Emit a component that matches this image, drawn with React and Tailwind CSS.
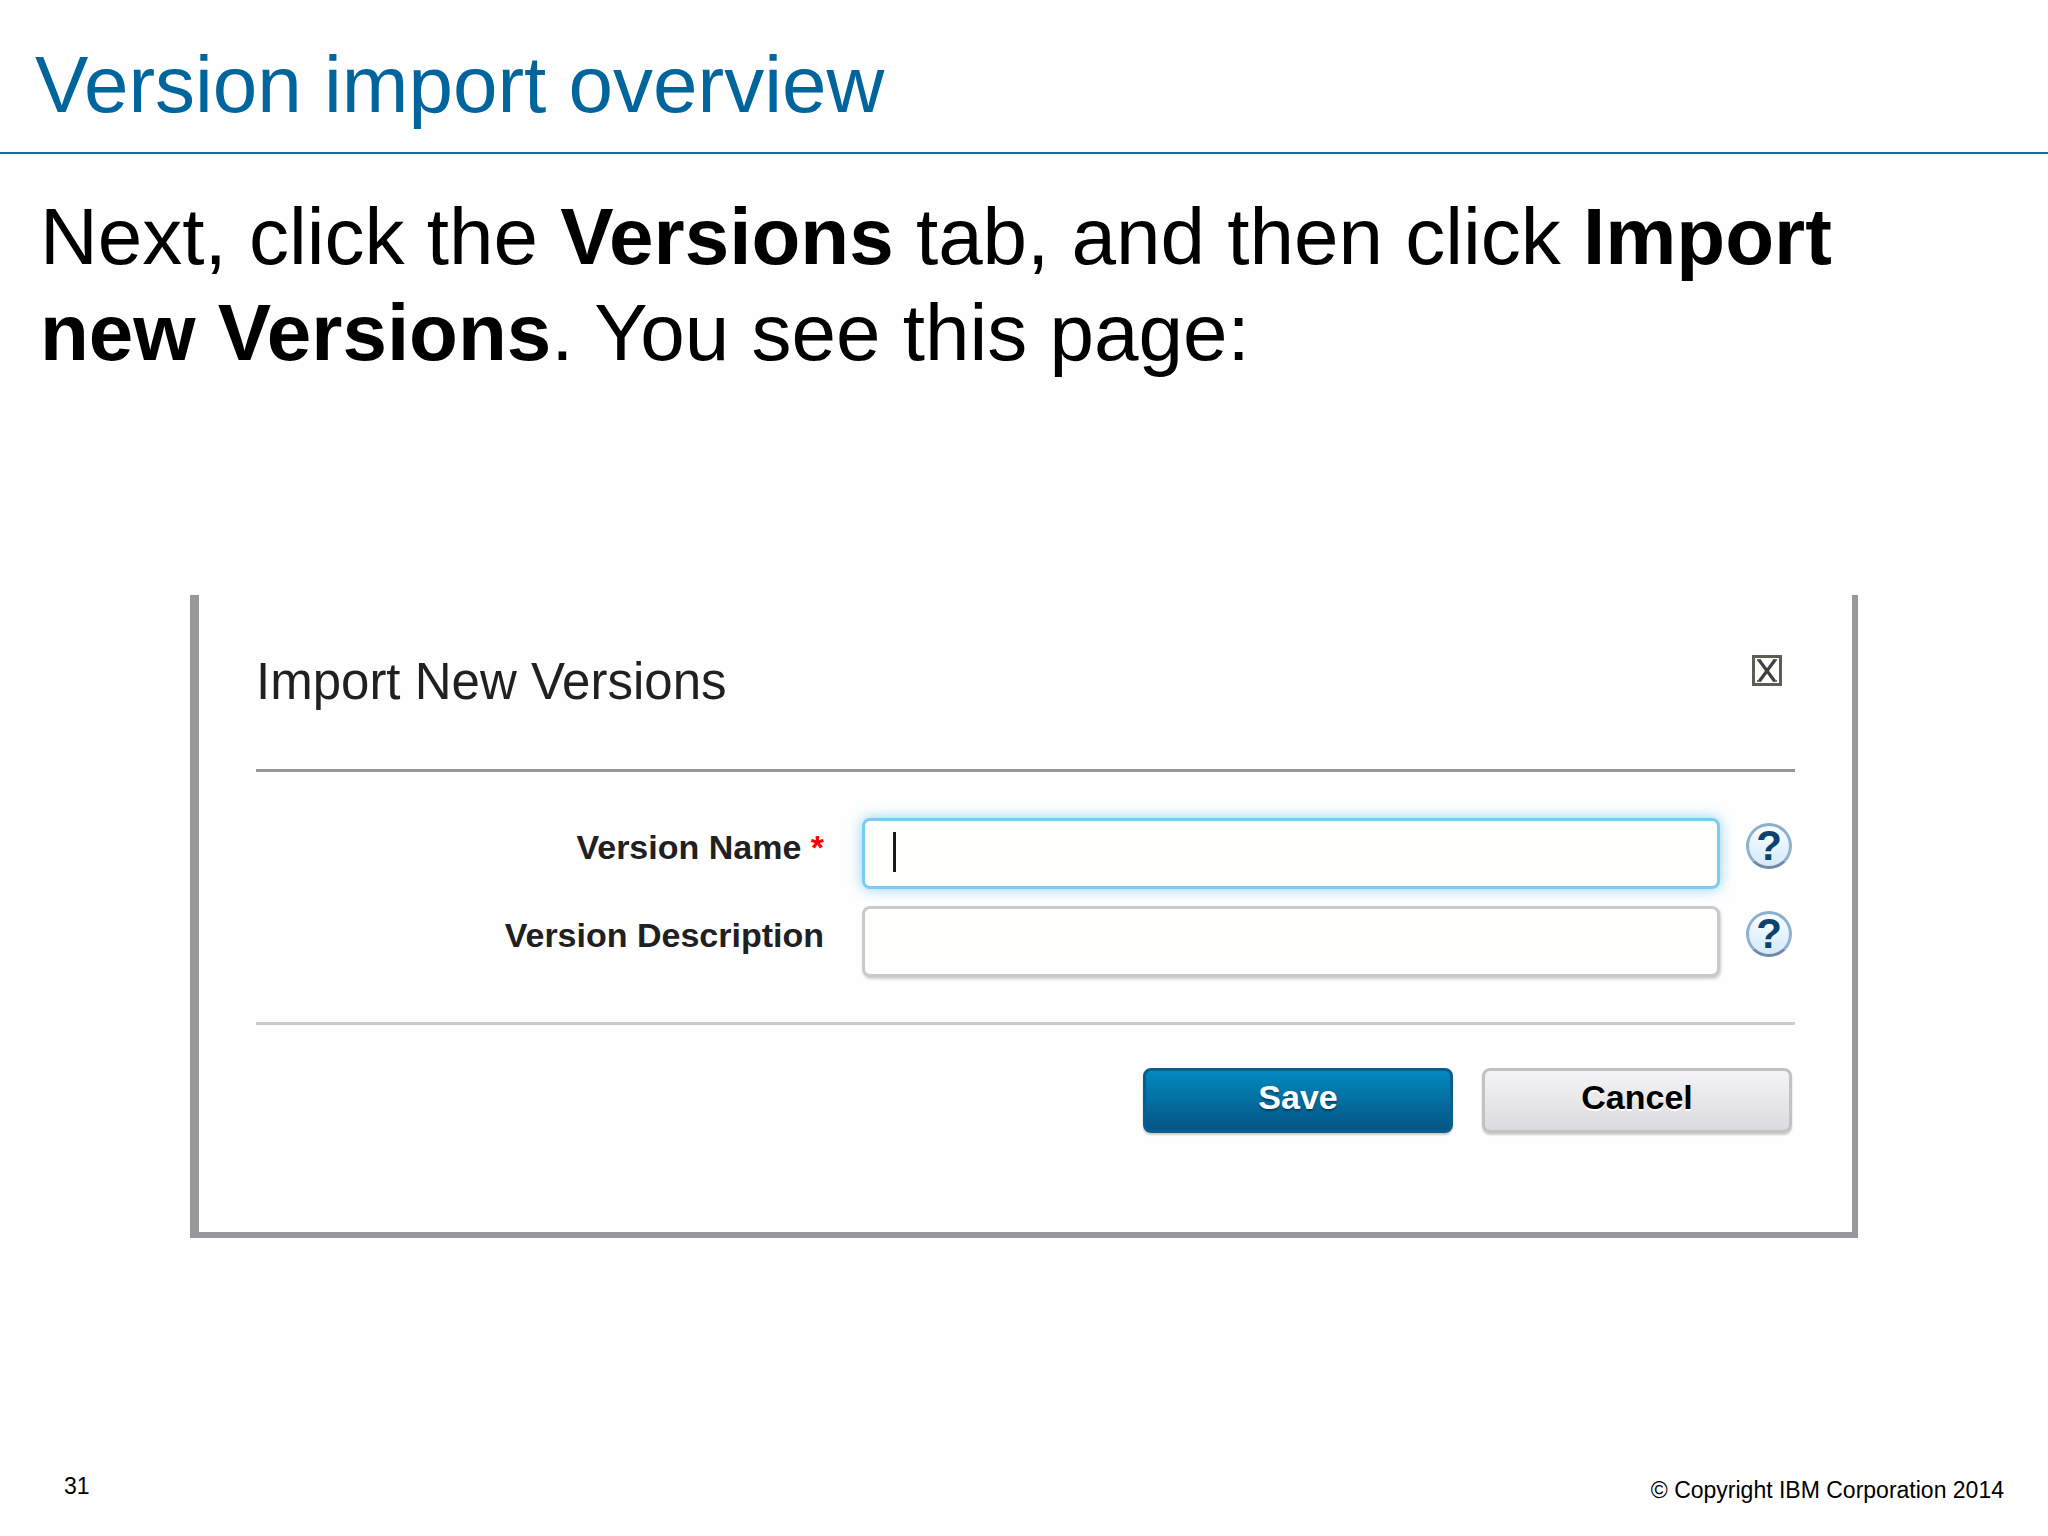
import React, { useState } from "react";

const fields = [
  { id: "version-name", label: "Version Name", required: true },
  { id: "version-description", label: "Version Description", required: false },
];

const CloseIcon = () => (
  <svg viewBox="0 0 30 31" className="h-[31px] w-[30px]" fill="none">
    <rect x="1.5" y="1.5" width="27" height="28" stroke="#5c5e54" strokeWidth="3" />
    <path
      d="M7 5L22.5 26M23 5L7.5 26"
      stroke="#3f413d"
      strokeWidth="3.2"
    />
    <path
      d="M5 5h4M21 5h4M5 26h4M21 26h4"
      stroke="#3f413d"
      strokeWidth="1.6"
    />
  </svg>
);

const HelpButton = ({ label }) => (
  <button
    type="button"
    aria-label={label}
    className="mt-[5px] ml-[26px] flex h-[46px] w-[46px] shrink-0 items-center justify-center rounded-full border-[3px] border-[#8fb1d1] border-b-[#7088a3] bg-linear-to-b from-[#fbfdff] to-[#d3eafa] text-[42px] leading-[42px] font-bold text-[#0c426d]"
  >
    ?
  </button>
);

const Field = ({ field, value, active, onChange, onFocus }) => (
  <div className="flex items-start">
    <label
      htmlFor={field.id}
      className="w-[568px] shrink-0 text-right text-[34px] leading-[58px] font-bold text-[#1f2022]"
    >
      {field.label}
      {field.required && <span className="text-[#ff0000]"> *</span>}
    </label>
    <div className="relative ml-[38px] flex-1">
      <input
        id={field.id}
        type="text"
        value={value}
        onChange={onChange}
        onFocus={onFocus}
        className={
          active
            ? "block h-[71px] w-full rounded-lg border-[3px] border-[#7accf2] bg-[#fffffd] px-7 text-[34px] caret-transparent shadow-[0_0_14px_rgba(82,184,246,0.65)] outline-none"
            : "block h-[71px] w-full rounded-lg border-[3px] border-[#cac9cb] bg-[#fffffd] px-7 text-[34px] shadow-[1px_2px_3px_rgba(0,0,0,0.2)] outline-none"
        }
      />
      {/* text cursor */}
      {active && !value && (
        <span className="absolute top-[14px] left-[31px] h-10 w-[3px] bg-[#1a1a1a]" />
      )}
    </div>
    <HelpButton label={`Help for ${field.label}`} />
  </div>
);

const ImportDialog = () => {
  const [values, setValues] = useState({});
  const [active, setActive] = useState("version-name");

  return (
    <form
      onSubmit={(e) => e.preventDefault()}
      className="mx-[190px] mt-[214px] border-r-[6px] border-b-[6px] border-l-[9px] border-[#989799] px-[57px] pt-[60px] pb-[99px]"
    >
      <div className="flex items-start justify-between border-b-[3px] border-[#989898] pb-[60px]">
        <h2 className="text-[51px] leading-[54px] text-[#1f2022]">
          Import New Versions
        </h2>
        <button type="button" aria-label="Close" className="mr-[13px]">
          <CloseIcon />
        </button>
      </div>
      <div className="flex flex-col gap-[17px] border-b-[3px] border-[#cccbcd] pt-[46px] pr-[3px] pb-[45px]">
        {fields.map((field) => (
          <Field
            key={field.id}
            field={field}
            value={values[field.id] || ""}
            active={active === field.id}
            onFocus={() => setActive(field.id)}
            onChange={(e) =>
              setValues({ ...values, [field.id]: e.target.value })
            }
          />
        ))}
      </div>
      <div className="mt-[43px] mr-[3px] flex justify-end gap-[29px] text-[34px] font-bold">
        <button
          type="submit"
          className="h-[65px] w-[310px] rounded-lg border-[3px] border-[#075f90] bg-linear-to-b from-[#028ac1] to-[#045583] pb-1.5 text-white shadow-[0_2px_2px_rgba(0,0,0,0.2)] text-shadow-[0_2px_2px_rgba(0,0,0,0.4)]"
        >
          Save
        </button>
        <button
          type="button"
          className="h-[65px] w-[310px] rounded-lg border-[3px] border-[#c2c1c3] bg-linear-to-b from-[#f4f3f5] to-[#dbdadc] pb-1.5 text-black shadow-[0_2px_2px_rgba(0,0,0,0.2)] text-shadow-[0_2px_0_#ffffff]"
        >
          Cancel
        </button>
      </div>
    </form>
  );
};

const App = () => {
  return (
    <div className="flex min-h-screen flex-col bg-[#fefefe] font-['Liberation_Sans',Arial,sans-serif] text-black">
      <header className="border-b-2 border-[#1c6d98] px-[35px] pt-[29px] pb-[11px]">
        <h1 className="text-[80px] leading-[112px] text-[#00659c]">
          Version import overview
        </h1>
      </header>
      <main className="flex-1">
        <p className="mt-[35px] mr-[120px] ml-[40px] text-[80px] leading-[96px]">
          Next, click the <b>Versions</b> tab, and then click <b>Import</b>{" "}
          <b>new Versions</b>. You see this page:
        </p>
        <ImportDialog />
      </main>
      <footer className="flex items-start justify-between px-[44px] pb-[30px] text-[23px] leading-[32px]">
        <span className="ml-5">31</span>
        <span className="mt-1">© Copyright IBM Corporation 2014</span>
      </footer>
    </div>
  );
};

export default App;
